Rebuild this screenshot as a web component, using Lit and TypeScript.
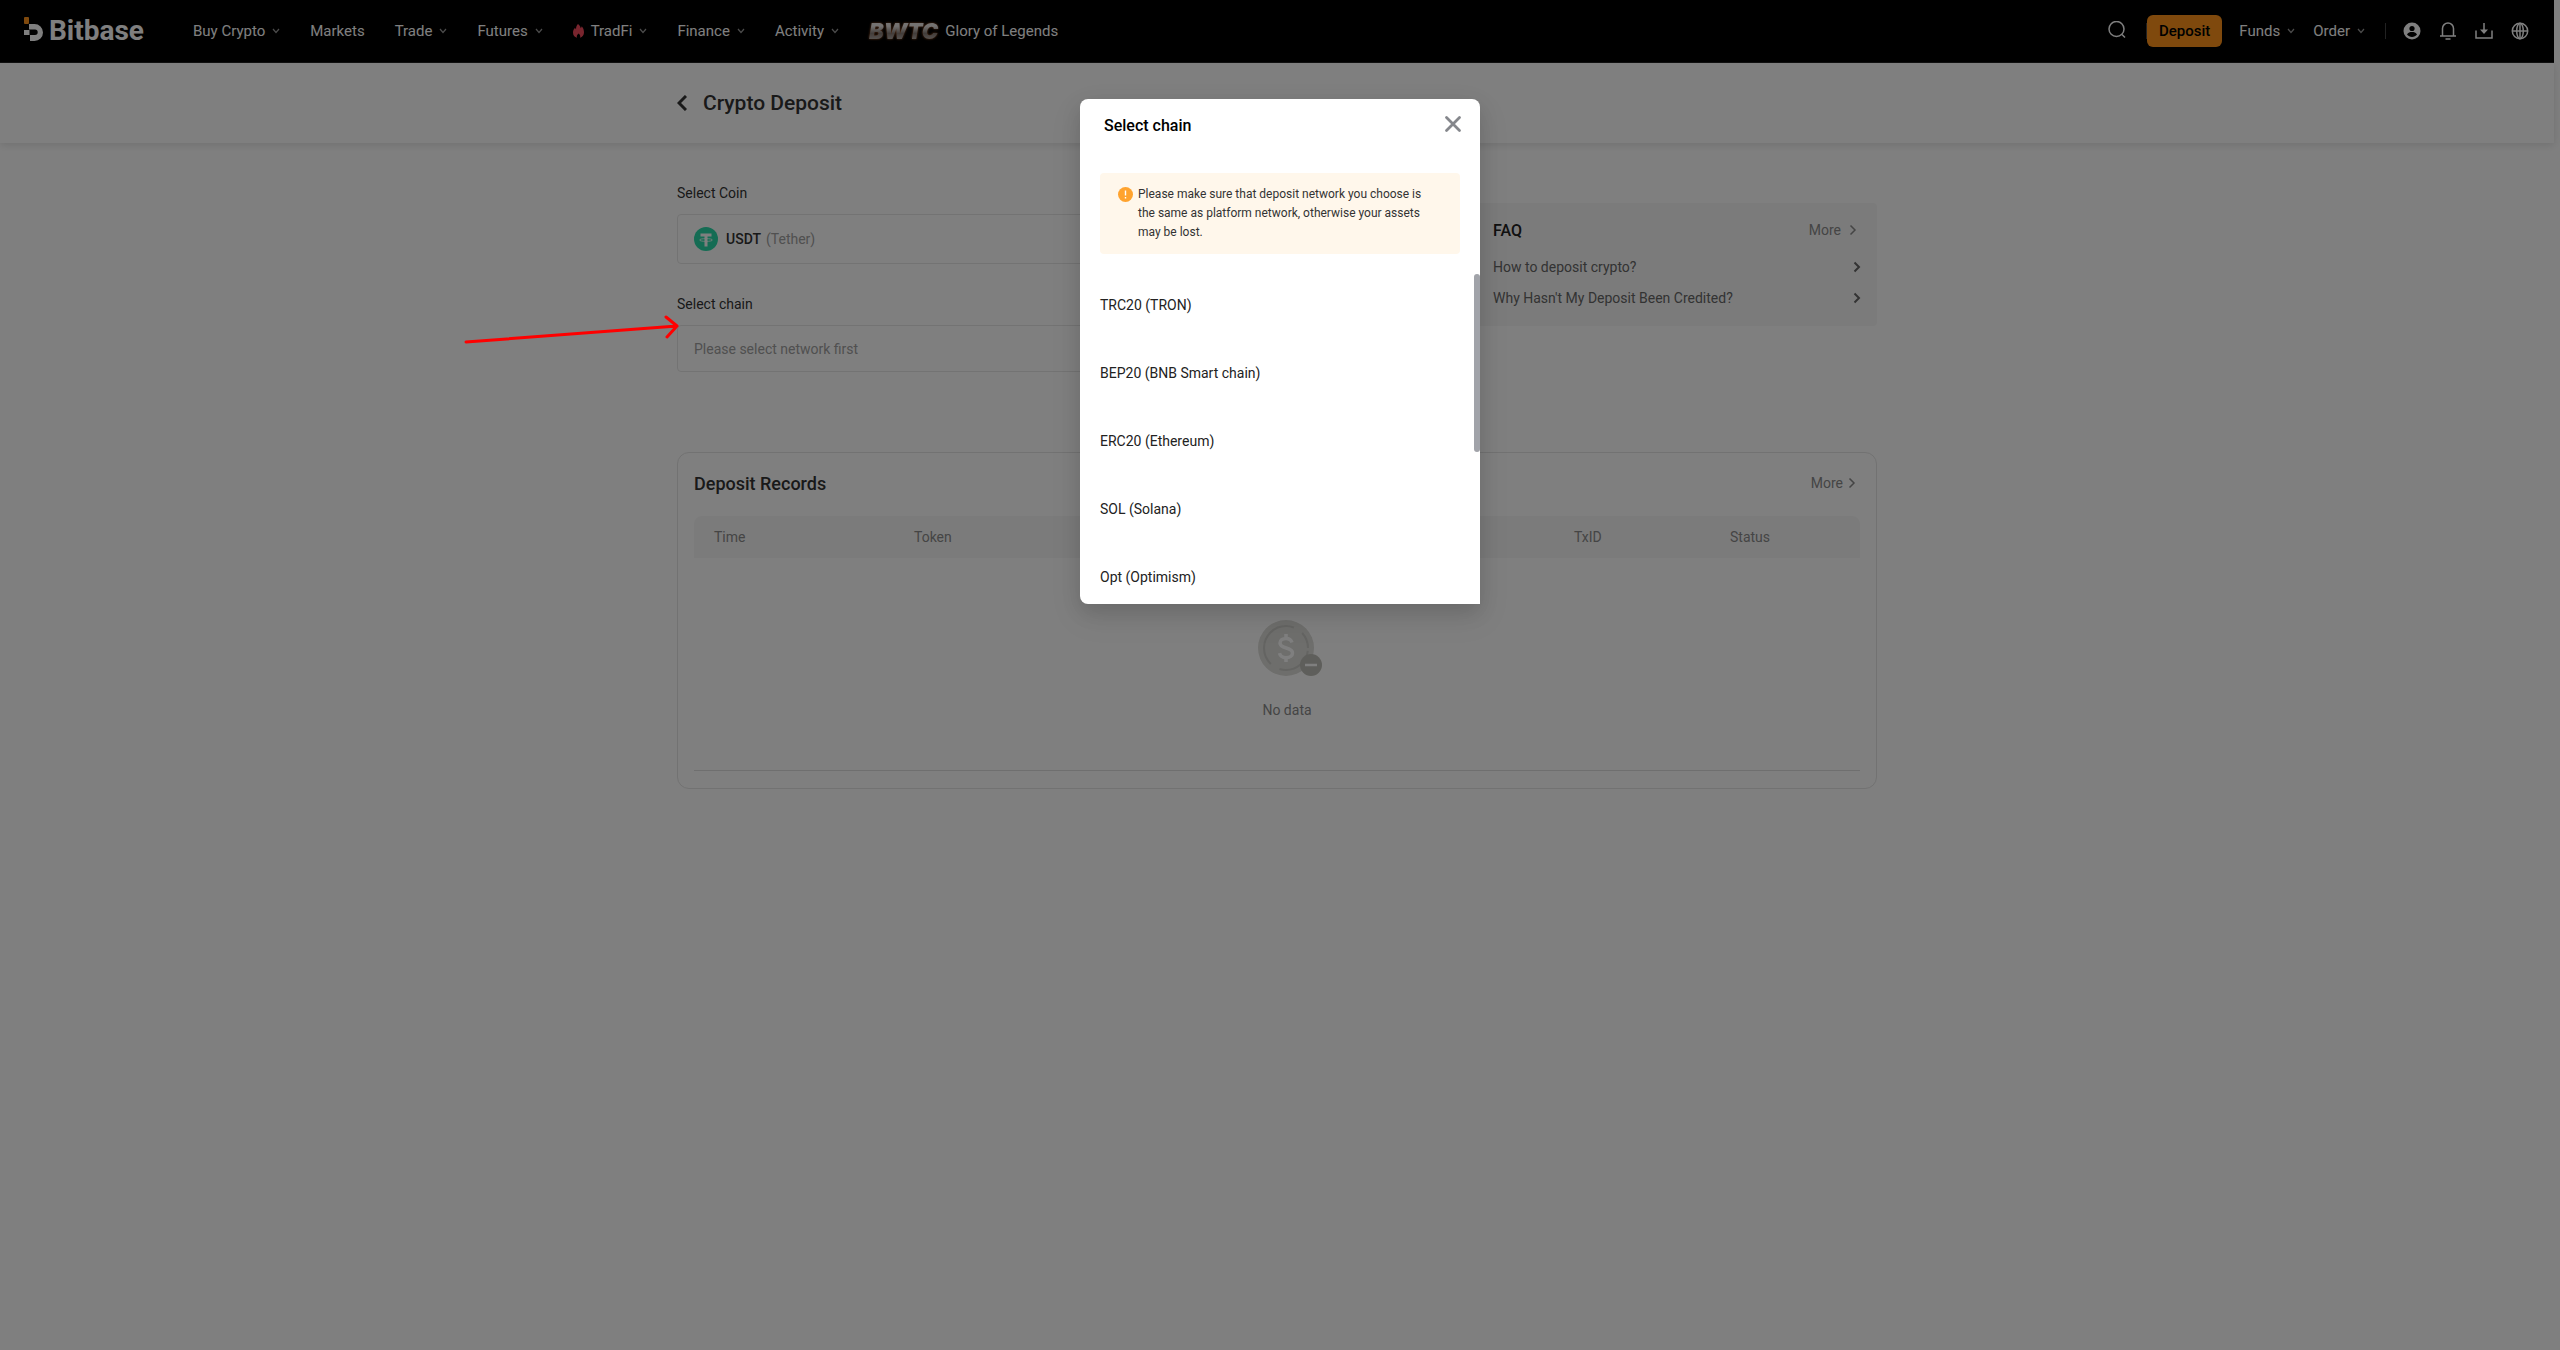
import { LitElement, html, css, nothing } from "lit";
import { customElement, property } from "lit/decorators.js";

const chevronDown = html`<svg class="chev" viewBox="0 0 8 6" width="8" height="6" aria-hidden="true">
  <path d="M1 1l3 3.5L7 1" fill="none" stroke="currentColor" stroke-width="1.2" />
</svg>`;

const chevronRight = (stroke: number) => html`<svg class="right" viewBox="0 0 8 12" width="8" height="12" aria-hidden="true">
  <path d="M1.5 1.5L6 6l-4.5 4.5" fill="none" stroke="currentColor" stroke-width=${stroke} />
</svg>`;

interface NavItem {
  label: string;
  menu?: boolean;
  icon?: "flame" | "bwtc";
}

const NAV: NavItem[] = [
  { label: "Buy Crypto", menu: true },
  { label: "Markets" },
  { label: "Trade", menu: true },
  { label: "Futures", menu: true },
  { label: "TradFi", menu: true, icon: "flame" },
  { label: "Finance", menu: true },
  { label: "Activity", menu: true },
  { label: "Glory of Legends", icon: "bwtc" },
];

const CHAINS = ["TRC20 (TRON)", "BEP20 (BNB Smart chain)", "ERC20 (Ethereum)", "SOL (Solana)", "Opt (Optimism)"];
const QUESTIONS = ["How to deposit crypto?", "Why Hasn't My Deposit Been Credited?"];

const base = css`
  * {
    box-sizing: border-box;
  }
  a {
    color: inherit;
    text-decoration: none;
  }
  button {
    font: inherit;
    color: inherit;
    background: none;
    border: 0;
    padding: 0;
    text-align: left;
    cursor: pointer;
  }
  svg {
    display: block;
    flex: none;
  }
  h1, h2, p, ul {
    margin: 0;
    padding: 0;
    list-style: none;
  }
`;

@customElement("site-header")
export class SiteHeader extends LitElement {
  static styles = [
    base,
    css`
      :host {
        display: block;
      }
      .bar {
        display: flex;
        align-items: center;
        height: 63px;
        padding: 0 25px 0 24px;
        background: #000;
        border-bottom: 1px solid #222;
        color: #fff;
        font-size: 15px;
      }
      .logo {
        display: flex;
        align-items: center;
        gap: 6px;
        font-size: 28px;
        font-weight: 700;
        line-height: 30px;
      }
      .mark {
        margin-bottom: 4px;
      }
      .nav {
        display: flex;
        align-items: center;
        gap: 30px;
        margin-left: 49px;
      }
      .item {
        display: flex;
        align-items: center;
        gap: 7px;
        white-space: nowrap;
      }
      .chev {
        opacity: 0.6;
      }
      .bwtc {
        font-family: Inter, sans-serif;
        font-size: 22px;
        font-weight: 900;
        font-style: italic;
        line-height: 24px;
        padding-right: 2px;
        margin-right: -2px;
        color: transparent;
        background: linear-gradient(#e8e4e2 30%, #857a74 60%, #c9c2be);
        background-clip: text;
        -webkit-background-clip: text;
        filter: drop-shadow(0 0 1px #b5622f);
      }
      .tools {
        display: flex;
        align-items: center;
        margin-left: auto;
        gap: 17px;
      }
      .deposit {
        height: 32px;
        padding: 0 12px;
        border-radius: 6px;
        background: #ff931a;
        color: #000;
        font-weight: 500;
      }
      .menus {
        display: flex;
        gap: 18px;
        margin-right: 3px;
      }
      .cta {
        display: flex;
        align-items: center;
        margin-left: 3px;
      }
      .rule {
        width: 1px;
        height: 16px;
        background: #444;
      }
      .icons {
        display: flex;
        align-items: center;
        gap: 18px;
      }
    `,
  ];

  render() {
    return html`<header class="bar">
      <a class="logo" href="#">
        <svg class="mark" viewBox="0 0 19 24" width="19" height="24" aria-hidden="true">
          <rect x="0" y="0" width="5" height="7" rx="1" fill="#ff931a" />
          <path d="M5 7h5.500a8.500 8.500 0 0 1 0 17H6v-6h5a2.700 2.700 0 0 0 0-5.400H5z" fill="#fff" />
          <rect x="0" y="13" width="5.500" height="5" fill="#fff" />
        </svg>
        <span>Bitbase</span>
      </a>
      <nav class="nav">
        ${NAV.map(
          (n) => html`<a class="item" href="#">
            ${n.icon === "flame"
              ? html`<svg viewBox="0 0 11 14" width="11" height="14" aria-hidden="true">
                  <path d="M5 0c1.600 1.200 2.500 2.600 2.700 4.200C8.300 3.700 8.700 3 8.800 2.200 10.300 4 11 6 11 8.200 11 11 9.500 13 7 13.800c.6-1.600.2-3-1.400-4.300C4 10.800 3.400 12.200 4 13.800 1.500 13 0 11.200 0 8.400 0 6.500.9 5 2 3.800c.2.700.5 1.100 1 1.400C3 3 3.700 1.300 5 0z" fill="#f24a5c" />
                </svg>`
              : nothing}
            ${n.icon === "bwtc" ? html`<span class="bwtc">BWTC</span>` : nothing}
            <span>${n.label}</span>${n.menu ? chevronDown : nothing}
          </a>`
        )}
      </nav>
      <div class="tools">
        <button aria-label="Search">
          <svg viewBox="0 0 18 20" width="18" height="20" fill="none" stroke="#fff" stroke-width="1.500">
            <circle cx="8.500" cy="8" r="7.500" /><path d="M14 13.500l3 3" />
          </svg>
        </button>
        <div class="cta"><span class="rule"></span><button class="deposit">Deposit</button></div>
        <div class="menus">
          <a class="item" href="#"><span>Funds</span>${chevronDown}</a>
          <a class="item" href="#"><span>Order</span>${chevronDown}</a>
        </div>
        <span class="rule"></span>
        <div class="icons">
          <button aria-label="Account">
            <svg viewBox="0 0 18 18" width="18" height="18">
              <circle cx="9" cy="9" r="8.500" fill="#fff" />
              <circle cx="9" cy="6.500" r="2.600" fill="#000" />
              <path d="M4 12.500c1-2 3-2.500 5-2.500s4 .5 5 2.500c-1.200 1.600-3 2.500-5 2.500s-3.800-.9-5-2.500z" fill="#000" />
            </svg>
          </button>
          <button aria-label="Notifications">
            <svg viewBox="0 0 18 18" width="18" height="18" fill="none" stroke="#fff" stroke-width="1.500">
              <path d="M3.500 14V6.500a5.500 5.500 0 0 1 11 0V14M1 14h16M6.500 17h5" />
            </svg>
          </button>
          <button aria-label="Download">
            <svg viewBox="0 0 18 18" width="18" height="18" fill="none" stroke="#fff" stroke-width="1.500">
              <path d="M1 8.500V16h16V8.500M9 1v8" /><path d="M5 7.500h8L9 12z" fill="#fff" stroke="none" />
            </svg>
          </button>
          <button aria-label="Language">
            <svg viewBox="0 0 18 18" width="18" height="18" fill="none" stroke="#fff" stroke-width="1.500">
              <circle cx="9" cy="9" r="7.700" /><ellipse cx="9" cy="9" rx="3.300" ry="7.700" /><path d="M1 9h16M9 1v16" />
            </svg>
          </button>
        </div>
      </div>
    </header>`;
  }
}

@customElement("deposit-form")
export class DepositForm extends LitElement {
  static styles = [
    base,
    css`
      :host {
        display: block;
      }
      label {
        display: block;
        line-height: 20px;
        color: #333;
      }
      .field {
        display: flex;
        align-items: center;
        width: 100%;
        height: 50px;
        margin: 11px 0 30px;
        padding: 0 16px;
        border: 1px solid #e6e6e6;
        border-radius: 4px;
      }
      .coin {
        margin-right: 8px;
      }
      .code {
        font-weight: 500;
        color: #333;
      }
      .name {
        margin-left: 5px;
        color: #a0a0a0;
      }
      .network {
        height: 47px;
        margin-bottom: 0;
        color: #a0a0a0;
      }
    `,
  ];

  render() {
    return html`
      <label for="coin">Select Coin</label>
      <button class="field" id="coin">
        <svg class="coin" viewBox="0 0 24 24" width="24" height="24" aria-hidden="true">
          <circle cx="12" cy="12" r="12" fill="#2bd9a8" />
          <path d="M6.500 6.500h11v3H13.500v10h-3v-10h-4z" fill="#fff" />
          <ellipse cx="12" cy="13" rx="6.500" ry="1.400" fill="none" stroke="#fff" stroke-width=".8" />
        </svg>
        <span class="code">USDT</span><span class="name">(Tether)</span>
      </button>
      <label for="network">Select chain</label>
      <button class="field network" id="network">Please select network first</button>
    `;
  }
}

@customElement("faq-card")
export class FaqCard extends LitElement {
  static styles = [
    base,
    css`
      :host {
        display: block;
        padding: 15px 16px 13px;
        background: #f7f7f7;
        border-radius: 4px;
      }
      .head,
      .row {
        display: flex;
        align-items: center;
        justify-content: space-between;
      }
      .head {
        height: 24px;
        margin-bottom: 9px;
      }
      h2 {
        font-size: 16px;
        font-weight: 500;
        color: #222;
      }
      .more {
        display: flex;
        align-items: center;
        gap: 8px;
        padding-right: 4px;
        color: #8a8a8a;
      }
      .row {
        height: 31px;
        color: #666;
      }
    `,
  ];

  render() {
    return html`
      <div class="head"><h2>FAQ</h2><a class="more" href="#">More ${chevronRight(1.5)}</a></div>
      ${QUESTIONS.map((q) => html`<a class="row" href="#"><span>${q}</span>${chevronRight(2)}</a>`)}
    `;
  }
}

@customElement("deposit-records")
export class DepositRecords extends LitElement {
  static styles = [
    base,
    css`
      :host {
        display: block;
        padding: 16px 16px 17px;
        border: 1px solid #e4e4e4;
        border-radius: 12px;
      }
      .head {
        display: flex;
        align-items: center;
        justify-content: space-between;
        height: 28px;
        margin-bottom: 19px;
      }
      h2 {
        font-size: 18px;
        font-weight: 500;
        color: #333;
      }
      .more {
        display: flex;
        align-items: center;
        gap: 5px;
        padding-right: 4px;
        color: #8a8a8a;
      }
      table {
        width: 100%;
        table-layout: fixed;
        border-collapse: separate;
        border-spacing: 0;
      }
      th {
        height: 42px;
        padding: 0 20px;
        background: #f7f7f7;
        text-align: left;
        font-weight: 400;
        color: #8a8a8a;
      }
      th:first-child {
        border-top-left-radius: 8px;
      }
      th:last-child {
        border-top-right-radius: 8px;
      }
      td {
        padding: 62px 0 50px 20px;
        border-bottom: 1px solid #dedede;
        color: #8a8a8a;
      }
      .time {
        width: 200px;
      }
      .tx {
        width: 156px;
      }
      .status {
        width: 150px;
      }
      .empty {
        display: flex;
        flex-direction: column;
        align-items: center;
        gap: 24px;
        line-height: 20px;
      }
    `,
  ];

  render() {
    return html`
      <div class="head"><h2>Deposit Records</h2><a class="more" href="#">More ${chevronRight(1.5)}</a></div>
      <table>
        <thead>
          <tr>
            <th class="time">Time</th>
            <th>Token</th>
            <th class="tx">TxID</th>
            <th class="status">Status</th>
          </tr>
        </thead>
        <tbody>
          <tr>
            <td colspan="4">
              <div class="empty">
                <svg viewBox="0 0 72 56" width="72" height="56" aria-hidden="true">
                  <circle cx="35" cy="28" r="28" fill="#dcdcd8" />
                  <circle cx="35" cy="28" r="22" fill="none" stroke="#c8c8c4" stroke-width="2" stroke-dasharray="38 10 60 10" stroke-dashoffset="-3" />
                  <path d="M41 22.500c-1-3-3.500-4-6-4-3.500 0-6 1.800-6 4.600 0 6.500 12.500 3.400 12.500 9.800 0 3-2.800 4.800-6.500 4.800-3 0-5.700-1.300-6.500-4.500M35 14v4M35 38v4" fill="none" stroke="#fff" stroke-width="3.500" />
                  <circle cx="60" cy="45" r="11" fill="#bdbdb6" />
                  <path d="M54 45h12" stroke="#fff" stroke-width="2.500" />
                </svg>
                <span>No data</span>
              </div>
            </td>
          </tr>
        </tbody>
      </table>
    `;
  }
}

@customElement("chain-dialog")
export class ChainDialog extends LitElement {
  @property({ type: Array }) chains: string[] = [];

  static styles = [
    base,
    css`
      :host {
        display: block;
        width: 400px;
        max-width: 100%;
        background: #fff;
        border-radius: 8px 8px 0 8px;
        box-shadow: 0 12px 32px 4px rgba(0, 0, 0, 0.06), 0 8px 20px rgba(0, 0, 0, 0.12);
      }
      .head {
        display: flex;
        align-items: flex-start;
        justify-content: space-between;
        padding: 16px 18px 0 24px;
      }
      h2 {
        font-size: 16px;
        font-weight: 500;
        line-height: 22px;
        color: #000;
      }
      .notice {
        display: flex;
        align-items: flex-start;
        gap: 5px;
        margin: 36px 20px 20px;
        padding: 12px 26px 12px 18px;
        background: #fff7eb;
        border-radius: 4px;
        font-size: 12px;
        line-height: 19px;
        color: #333;
      }
      .warn {
        margin-top: 2px;
      }
      .scroll {
        position: relative;
        height: 330px;
        overflow: hidden;
        border-radius: 0 0 0 8px;
      }
      .thumb {
        position: absolute;
        top: 0;
        right: 0;
        width: 6px;
        height: 178px;
        border-radius: 3px;
        background: #a1a3a9;
      }
      .chain {
        display: block;
        width: 100%;
        height: 62px;
        margin-bottom: 6px;
        padding: 0 20px;
        color: #222;
      }
    `,
  ];

  render() {
    return html`
      <div class="head">
        <h2>Select chain</h2>
        <button aria-label="Close">
          <svg viewBox="0 0 18 18" width="18" height="18">
            <path d="M2.500 2.500l13 13M15.500 2.500l-13 13" stroke="#85878c" stroke-width="2.800" stroke-linecap="round" />
          </svg>
        </button>
      </div>
      <div class="notice">
        <svg class="warn" viewBox="0 0 15 15" width="15" height="15" aria-hidden="true">
          <circle cx="7.500" cy="7.500" r="7.500" fill="#ffa32e" />
          <path d="M7.500 3.500v5M7.500 10v1.500" stroke="#fff" stroke-width="1.400" />
        </svg>
        <p>Please make sure that deposit network you choose is the same as platform network, otherwise your assets may be lost.</p>
      </div>
      <div class="scroll">
        <ul>
          ${this.chains.map((c) => html`<li><button class="chain">${c}</button></li>`)}
        </ul>
        <div class="thumb"></div>
      </div>
    `;
  }
}

@customElement("app-root")
export class AppRoot extends LitElement {
  static styles = [
    base,
    css`
      :host {
        display: block;
        position: relative;
        min-height: 100vh;
        background: #fff;
        font-family: Roboto, "Liberation Sans", sans-serif;
        font-size: 14px;
      }
      .page {
        padding-right: 6px;
      }
      .title {
        height: 80px;
        box-shadow: 0 2px 8px rgba(0, 0, 0, 0.12);
      }
      .wrap {
        max-width: 1200px;
        margin: 0 auto;
      }
      .crumb {
        display: flex;
        align-items: center;
        gap: 16px;
        height: 80px;
        color: #333;
      }
      h1 {
        font-size: 21px;
        font-weight: 500;
      }
      .top {
        display: grid;
        grid-template-columns: 1fr 400px;
        align-items: start;
        gap: 40px;
        padding-top: 40px;
        margin-bottom: 80px;
      }
      .faq {
        margin-top: 20px;
      }
      .overlay {
        position: absolute;
        inset: 0;
        display: flex;
        justify-content: center;
        align-items: flex-start;
        padding-top: 99px;
        background: rgba(0, 0, 0, 0.5);
      }
      .arrow {
        position: absolute;
        top: 310px;
        left: calc(50% - 816px);
      }
    `,
  ];

  render() {
    return html`
      <div class="page">
        <site-header></site-header>
        <div class="title">
          <div class="wrap crumb">
            <a href="#" aria-label="Back">
              <svg viewBox="0 0 10 16" width="10" height="16">
                <path d="M9 1L2 8l7 7" fill="none" stroke="#333" stroke-width="3" />
              </svg>
            </a>
            <h1>Crypto Deposit</h1>
          </div>
        </div>
        <main class="wrap">
          <div class="top">
            <deposit-form></deposit-form>
            <faq-card class="faq"></faq-card>
          </div>
          <deposit-records></deposit-records>
        </main>
      </div>
      <div class="overlay">
        <chain-dialog role="dialog" aria-label="Select chain" .chains=${CHAINS}></chain-dialog>
      </div>
      <svg class="arrow" viewBox="0 0 216 34" width="216" height="34" aria-hidden="true">
        <path d="M2 32L213 16M202 7l11 9-10 11" fill="none" stroke="#f00" stroke-width="3" stroke-linejoin="round" stroke-linecap="round" />
      </svg>
    `;
  }
}
